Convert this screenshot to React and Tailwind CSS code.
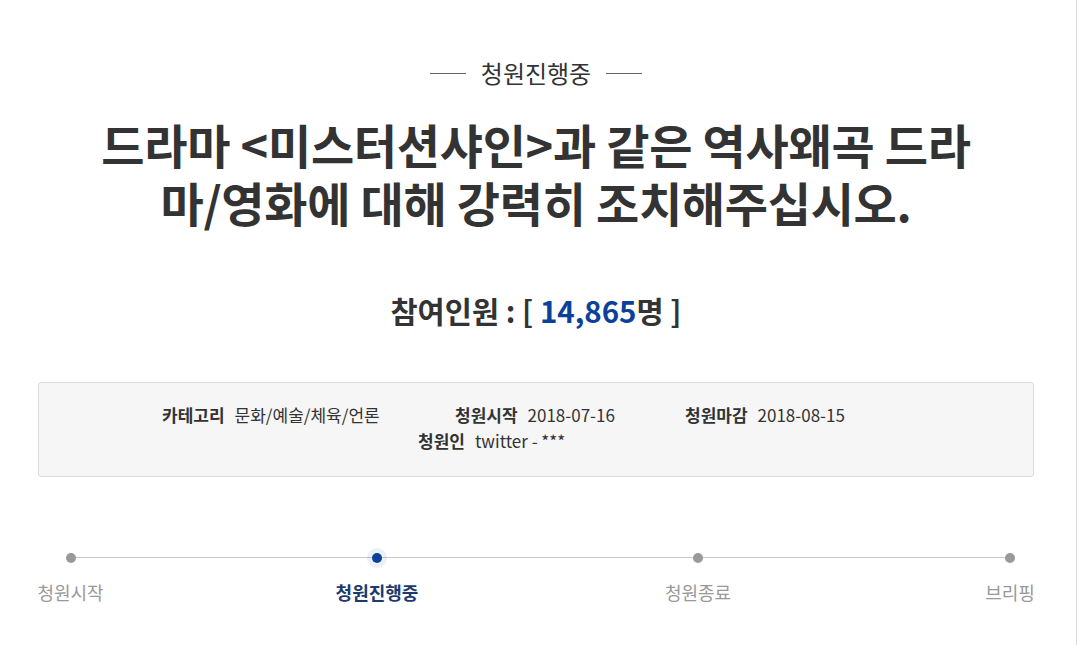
import React from 'react';

const steps = [
    { label: '청원시작', w: 'w-[65px]', ml: '' },
    { label: '청원진행중', w: 'w-[80px]', ml: 'ml-[234px]', active: true },
    { label: '청원종료', w: 'w-[66px]', ml: 'ml-[248px]' },
    { label: '브리핑', w: 'w-[48px]', ml: 'ml-auto' },
];

export default function App() {
    return (
        <div className="w-[1077px] h-[645px] bg-white border-r border-[#d9d9d9] font-['Noto_Sans_CJK_KR',sans-serif] text-[#333]">
            <div className="pl-[38px] pr-[42px] pt-[57px]">

                {/* 상태 라벨 */}
                <div className="flex items-center justify-center gap-[15px]">
                    <span className="w-[36px] h-px bg-[#666]"></span>
                    <span className="text-[24px] leading-[32px] text-[#333]">청원진행중</span>
                    <span className="w-[36px] h-px bg-[#666]"></span>
                </div>

                {/* 제목 */}
                <h1 className="mt-[26px] text-center text-[47px] leading-[58px] font-bold tracking-[-0.3px] text-[#333]">
                    드라마 &lt;미스터션샤인&gt;과 같은 역사왜곡 드라<br />마/영화에 대해 강력히 조치해주십시오.
                </h1>

                {/* 참여인원 */}
                <div className="mt-[59px] text-center text-[29.5px] leading-[40px] font-bold text-[#333]">
                    참여인원 : [ <span className="text-[#0b4199]">14,865</span>명 ]
                </div>

                {/* 정보 박스 */}
                <div className="mt-[52px] h-[95px] bg-[#f6f6f6] border border-[#dcdcdc] rounded-[3px] pt-[19px] text-[17px] leading-[26px]">
                    <div className="flex pl-[123px]">
                        <div className="w-[293px]"><b className="font-bold mr-[10px]">카테고리</b>문화/예술/체육/언론</div>
                        <div className="w-[230px]"><b className="font-bold mr-[10px]">청원시작</b>2018-07-16</div>
                        <div><b className="font-bold mr-[10px]">청원마감</b>2018-08-15</div>
                    </div>
                    <div className="flex pl-[379px]">
                        <div><b className="font-bold mr-[10px]">청원인</b>twitter - ***</div>
                    </div>
                </div>

                {/* 진행 단계 */}
                <div className="relative mt-[76px]">
                    <div className="absolute left-[32px] right-[25px] top-[4px] h-px bg-[#c8c8c8]"></div>
                    <div className="relative flex">
                        {steps.map((s) => (
                            <div key={s.label} className={`${s.w} ${s.ml} flex flex-col items-center`}>
                                <span className={s.active
                                    ? 'w-[10px] h-[10px] rounded-full bg-[#0b4199] shadow-[0_0_0_5px_rgba(11,65,153,0.08)]'
                                    : 'w-[10px] h-[10px] rounded-full bg-[#999]'}></span>
                                <span className={s.active
                                    ? 'mt-[16px] text-[18px] leading-[26px] font-bold text-[#1c3a6e] whitespace-nowrap'
                                    : 'mt-[16px] text-[18px] leading-[26px] text-[#999] whitespace-nowrap'}>{s.label}</span>
                            </div>
                        ))}
                    </div>
                </div>

            </div>
        </div>
    );
}
